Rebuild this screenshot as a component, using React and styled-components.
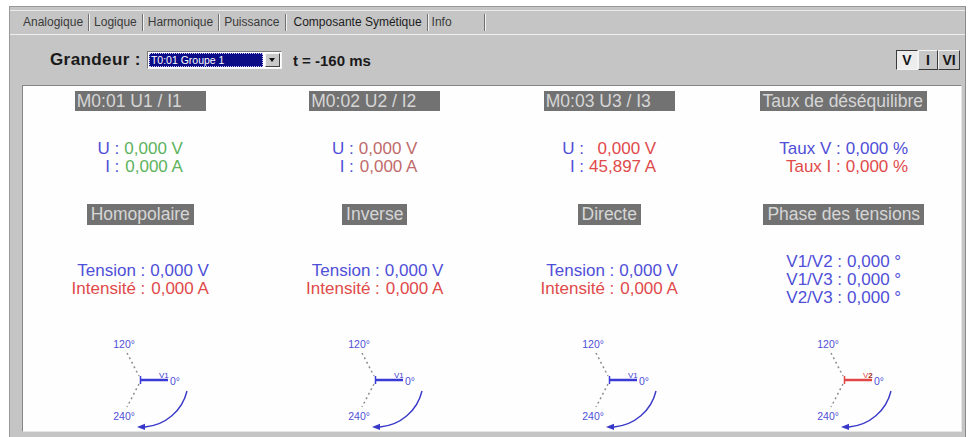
import React from "react";
import styled, { createGlobalStyle } from "styled-components";

const GlobalStyle = createGlobalStyle`
  html, body {
    margin: 0;
    padding: 0;
    background: #ffffff;
    font-family: "Liberation Sans", Arial, sans-serif;
  }
`;

const BLUE = "#4f4fd8";
const RED = "#e04a4a";
const GREEN = "#5cb35c";
const DUSK = "#c06a6a";

const Window = styled.div`
  margin: 6px 0 0 9px;
  width: 957px;
  height: 431px;
  box-sizing: border-box;
  background: #c5c5c5;
  border-top: 1px solid #989898;
  border-left: 1px solid #989898;
  border-right: 1px solid #8a8a8a;
  display: flex;
  flex-direction: column;
`;

const TabStrip = styled.div`
  margin-top: 3px;
  border-top: 1px solid #ebebeb;
  height: 23px;
  display: flex;
  align-items: center;
  padding-left: 8px;
`;

const Tab = styled.div`
  height: 17px;
  line-height: 17px;
  padding: ${(p) => (p.$wide ? "0 32px 0 4px" : "0 5px")};
  font-size: 12px;
  color: ${(p) => (p.$active ? "#1c1c1c" : "#3a3a3a")};
  border-right: 1px solid #707070;
  box-shadow: 1px 0 0 #f2f2f2;
  margin-left: ${(p) => (p.$active ? "3px" : "0")};
  white-space: nowrap;
`;

const TabPanel = styled.div`
  flex: 1;
  border-top: 1px solid #efefef;
  display: flex;
  flex-direction: column;
  padding: 0 3px 4px 12px;
`;

const Toolbar = styled.div`
  height: 50px;
  display: flex;
  align-items: center;
  padding: 0 2px 0 28px;
`;

const BoldLabel = styled.span`
  font-weight: bold;
  font-size: ${(p) => p.$size || 15}px;
  letter-spacing: ${(p) => p.$track || 0}px;
  color: #1a1a1a;
`;

const Combo = styled.div`
  width: 135px;
  height: 18px;
  box-sizing: border-box;
  display: flex;
  background: #ffffff;
  border-top: 1px solid #7a7a7a;
  border-left: 1px solid #7a7a7a;
  border-right: 1px solid #f4f4f4;
  border-bottom: 1px solid #f4f4f4;
  padding: 1px;
  margin: 0 11px 0 6px;
`;

const ComboValue = styled.div`
  flex: 1;
  background: #0c0c86;
  color: #ffffff;
  font-size: 10.5px;
  line-height: 14px;
  padding-left: 2px;
  margin-right: 2px;
  outline: 1px dotted #c8c8ff;
  outline-offset: -1px;
`;

const ComboButton = styled.div`
  width: 15px;
  background: #c9c9c9;
  border-top: 1px solid #f6f6f6;
  border-left: 1px solid #f6f6f6;
  border-right: 1px solid #404040;
  border-bottom: 1px solid #404040;
  box-sizing: border-box;
  display: flex;
  align-items: center;
  justify-content: center;
`;

const Arrow = styled.div`
  width: 0;
  height: 0;
  border-left: 3.5px solid transparent;
  border-right: 3.5px solid transparent;
  border-top: 4px solid #101010;
`;

const Spacer = styled.div`
  flex: 1;
`;

const ToggleGroup = styled.div`
  display: flex;
  height: 20px;
`;

const Toggle = styled.div`
  width: ${(p) => p.$w}px;
  box-sizing: border-box;
  font-weight: bold;
  font-size: 14px;
  line-height: 18px;
  text-align: center;
  color: #151515;
  background: ${(p) => (p.$pressed ? "#ededed" : "#c6c6c6")};
  border-style: solid;
  border-width: 1px;
  border-color: ${(p) =>
    p.$pressed
      ? "#3a3a3a #f4f4f4 #f4f4f4 #3a3a3a"
      : "#f4f4f4 #3a3a3a #3a3a3a #f4f4f4"};
`;

const Display = styled.div`
  height: 347px;
  box-sizing: border-box;
  background: #fefefe;
  border-style: solid;
  border-width: 1px;
  border-color: #858585 #e6e6e6 #e6e6e6 #858585;
  display: grid;
  grid-template-columns: repeat(4, 1fr);
`;

const Column = styled.div`
  display: grid;
  grid-template-rows: 25px 93px 21px 109px 1fr;
  justify-items: center;
`;

const Caption = styled.div`
  align-self: end;
  box-sizing: border-box;
  min-width: ${(p) => (p.$fixed ? "131px" : "0")};
  height: ${(p) => (p.$fixed ? 20 : 21)}px;
  line-height: ${(p) => (p.$fixed ? 20 : 21)}px;
  padding: ${(p) => (p.$fixed ? "0 4px 0 2px" : "0 4px")};
  background: #727272;
  color: #d6d6d6;
  font-size: 17.5px;
  white-space: nowrap;
`;

const Readout = styled.div`
  align-self: center;
  display: grid;
  grid-template-columns: auto auto;
  column-gap: 5px;
  font-size: 17px;
  line-height: 18px;
  white-space: nowrap;
`;

const Key = styled.span`
  text-align: right;
  color: ${(p) => p.$c};
`;

const Val = styled.span`
  text-align: right;
  color: ${(p) => p.$c};
`;

const DiagramBox = styled.div`
  align-self: start;
  width: 100px;
  height: 96px;
`;

function Phasor({ color, label, labelAccent }) {
  return (
    <DiagramBox>
      <svg width="100" height="96" viewBox="0 0 100 96">
        <g fontFamily="Liberation Sans, Arial, sans-serif" fontSize="10.5" fill={BLUE}>
          <text x="45" y="14" textAnchor="end">120°</text>
          <text x="45" y="86" textAnchor="end">240°</text>
          <text x="80" y="51">0°</text>
        </g>
        <line x1="37" y1="19" x2="49" y2="42" stroke="#8e8e8e" strokeWidth="1.5" strokeDasharray="2 3" />
        <line x1="49" y1="50" x2="37" y2="73" stroke="#8e8e8e" strokeWidth="1.5" strokeDasharray="2 3" />
        <line x1="50" y1="46" x2="78" y2="46" stroke={color} strokeWidth="2.5" />
        <line x1="50.5" y1="42" x2="50.5" y2="50" stroke={color} strokeWidth="1.5" />
        <text x="69" y="44" fontSize="8" fontFamily="Liberation Sans, Arial, sans-serif" fill={color}>
          V<tspan fill={labelAccent || color} fontWeight={labelAccent ? "bold" : "normal"}>{label}</tspan>
        </text>
        <path d="M 97 57 A 47 47 0 0 1 55 93" fill="none" stroke="#3838c8" strokeWidth="1.4" />
        <polygon points="47,93 55,89.8 55,96" fill="#3838c8" />
      </svg>
    </DiagramBox>
  );
}

const tabs = ["Analogique", "Logique", "Harmonique", "Puissance", "Composante Symétique", "Info"];

const columns = [
  {
    title: "M0:01 U1 / I1",
    top: [
      ["U :", BLUE, "0,000 V", GREEN],
      ["I :", BLUE, "0,000 A", GREEN],
    ],
    sub: "Homopolaire",
  },
  {
    title: "M0:02 U2 / I2",
    top: [
      ["U :", BLUE, "0,000 V", DUSK],
      ["I :", BLUE, "0,000 A", DUSK],
    ],
    sub: "Inverse",
  },
  {
    title: "M0:03 U3 / I3",
    top: [
      ["U :", BLUE, "0,000 V", RED],
      ["I :", BLUE, "45,897 A", RED],
    ],
    sub: "Directe",
  },
  {
    title: "Taux de déséquilibre",
    top: [
      ["Taux V :", BLUE, "0,000 %", BLUE],
      ["Taux I :", RED, "0,000 %", RED],
    ],
    sub: "Phase des tensions",
  },
];

const tensionRows = [
  ["Tension :", BLUE, "0,000 V", BLUE],
  ["Intensité :", RED, "0,000 A", RED],
];

const phaseRows = [
  ["V1/V2 :", BLUE, "0,000 °", BLUE],
  ["V1/V3 :", BLUE, "0,000 °", BLUE],
  ["V2/V3 :", BLUE, "0,000 °", BLUE],
];

function Lines({ rows }) {
  return (
    <Readout>
      {rows.map(([k, kc, v, vc]) => (
        <React.Fragment key={k}>
          <Key $c={kc}>{k}</Key>
          <Val $c={vc}>{v}</Val>
        </React.Fragment>
      ))}
    </Readout>
  );
}

export default function App() {
  return (
    <>
      <GlobalStyle />
      <Window>
        <TabStrip>
          {tabs.map((t) => (
            <Tab key={t} $active={t === "Composante Symétique"} $wide={t === "Info"}>
              {t}
            </Tab>
          ))}
        </TabStrip>
        <TabPanel>
          <Toolbar>
            <BoldLabel $size={17} $track={0.4}>Grandeur :</BoldLabel>
            <Combo>
              <ComboValue>T0:01 Groupe 1</ComboValue>
              <ComboButton>
                <Arrow />
              </ComboButton>
            </Combo>
            <BoldLabel>t = -160 ms</BoldLabel>
            <Spacer />
            <ToggleGroup>
              <Toggle $w={22} $pressed>V</Toggle>
              <Toggle $w={20}>I</Toggle>
              <Toggle $w={22}>VI</Toggle>
            </ToggleGroup>
          </Toolbar>
          <Display>
            {columns.map((c, i) => (
              <Column key={c.title}>
                <Caption $fixed>{c.title}</Caption>
                <Lines rows={c.top} />
                <Caption>{c.sub}</Caption>
                <Lines rows={i === 3 ? phaseRows : tensionRows} />
                {i === 3 ? (
                  <Phasor color="#e04646" label="2" labelAccent="#9a2a10" />
                ) : (
                  <Phasor color="#3a3ad6" label="1" />
                )}
              </Column>
            ))}
          </Display>
        </TabPanel>
      </Window>
    </>
  );
}
